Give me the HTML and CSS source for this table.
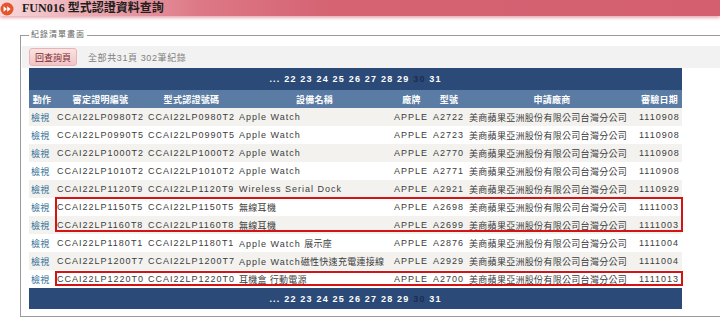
FILE: index.html
```html
<!DOCTYPE html>
<html lang="zh-Hant">
<head>
  <meta charset="UTF-8" />
  <title>FUN016 型式認證資料查詢</title>
  <link rel="stylesheet" href="styles.css">
</head>
<body>
  <header class="topbar">
    <svg class="topicon" width="14" height="14" viewBox="0 0 14 14">
      <circle cx="7" cy="7" r="6.5" fill="#e4572e"/>
      <path d="M3.6 4.2 L7 7 L3.6 9.8 Z M7.2 4.2 L10.6 7 L7.2 9.8 Z" fill="#fff"/>
    </svg>
    <h1>FUN016 型式認證資料查詢</h1>
  </header>

  <!-- 紀錄清單 -->
  <fieldset class="list">
    <legend>紀錄清單畫面</legend>
    <div class="toolbar">
      <button class="btn">回查詢頁</button>
      <span class="total">全部共31頁 302筆紀錄</span>
    </div>

    <div class="grid-wrap">
      <table class="grid">
        <colgroup>
          <col style="width:26px"><col style="width:91px"><col style="width:91px"><col style="width:155px">
          <col style="width:39px"><col style="width:36px"><col style="width:170px"><col style="width:45px">
        </colgroup>
        <thead>
          <tr class="pager"><td colspan="8">
            <span>...</span> <a>22</a> <a>23</a> <a>24</a> <a>25</a> <a>26</a> <a>27</a> <a>28</a> <a>29</a> <a class="cur">30</a> <a>31</a>
          </td></tr>
          <tr class="head">
            <th>動作</th><th>審定證明編號</th><th>型式認證號碼</th><th>設備名稱</th>
            <th>廠牌</th><th>型號</th><th>申請廠商</th><th>審驗日期</th>
          </tr>
        </thead>
        <tbody>
          <tr><td><a class="view">檢視</a></td><td>CCAI22LP0980T2</td><td>CCAI22LP0980T2</td><td>Apple Watch</td><td>APPLE</td><td>A2722</td><td class="zh">美商蘋果亞洲股份有限公司台灣分公司</td><td>1110908</td></tr>
          <tr><td><a class="view">檢視</a></td><td>CCAI22LP0990T5</td><td>CCAI22LP0990T5</td><td>Apple Watch</td><td>APPLE</td><td>A2723</td><td class="zh">美商蘋果亞洲股份有限公司台灣分公司</td><td>1110908</td></tr>
          <tr><td><a class="view">檢視</a></td><td>CCAI22LP1000T2</td><td>CCAI22LP1000T2</td><td>Apple Watch</td><td>APPLE</td><td>A2770</td><td class="zh">美商蘋果亞洲股份有限公司台灣分公司</td><td>1110908</td></tr>
          <tr><td><a class="view">檢視</a></td><td>CCAI22LP1010T2</td><td>CCAI22LP1010T2</td><td>Apple Watch</td><td>APPLE</td><td>A2771</td><td class="zh">美商蘋果亞洲股份有限公司台灣分公司</td><td>1110908</td></tr>
          <tr><td><a class="view">檢視</a></td><td>CCAI22LP1120T9</td><td>CCAI22LP1120T9</td><td>Wireless Serial Dock</td><td>APPLE</td><td>A2921</td><td class="zh">美商蘋果亞洲股份有限公司台灣分公司</td><td>1110929</td></tr>
          <tr><td><a class="view">檢視</a></td><td>CCAI22LP1150T5</td><td>CCAI22LP1150T5</td><td class="zh">無線耳機</td><td>APPLE</td><td>A2698</td><td class="zh">美商蘋果亞洲股份有限公司台灣分公司</td><td>1111003</td></tr>
          <tr><td><a class="view">檢視</a></td><td>CCAI22LP1160T8</td><td>CCAI22LP1160T8</td><td class="zh">無線耳機</td><td>APPLE</td><td>A2699</td><td class="zh">美商蘋果亞洲股份有限公司台灣分公司</td><td>1111003</td></tr>
          <tr><td><a class="view">檢視</a></td><td>CCAI22LP1180T1</td><td>CCAI22LP1180T1</td><td>Apple Watch <span class="zh">展示座</span></td><td>APPLE</td><td>A2876</td><td class="zh">美商蘋果亞洲股份有限公司台灣分公司</td><td>1111004</td></tr>
          <tr><td><a class="view">檢視</a></td><td>CCAI22LP1200T7</td><td>CCAI22LP1200T7</td><td>Apple Watch<span class="zh">磁性快速充電連接線</span></td><td>APPLE</td><td>A2929</td><td class="zh">美商蘋果亞洲股份有限公司台灣分公司</td><td>1111004</td></tr>
          <tr><td><a class="view">檢視</a></td><td>CCAI22LP1220T0</td><td>CCAI22LP1220T0</td><td class="zh">耳機盒 行動電源</td><td>APPLE</td><td>A2700</td><td class="zh">美商蘋果亞洲股份有限公司台灣分公司</td><td>1111013</td></tr>
        </tbody>
        <tfoot>
          <tr class="pager foot"><td colspan="8">
            <span>...</span> <a>22</a> <a>23</a> <a>24</a> <a>25</a> <a>26</a> <a>27</a> <a>28</a> <a>29</a> <a class="cur">30</a> <a>31</a>
          </td></tr>
        </tfoot>
      </table>

      <!-- red annotation boxes -->
      <div class="mark mark-a"></div>
      <div class="mark mark-b"></div>
    </div>
  </fieldset>
</body>
</html>
```

FILE: styles.css
```css
body        {margin:0; background:#fff; font-family:"Liberation Sans", "Noto Sans CJK TC", sans-serif; overflow:hidden;}

.topbar     {height:16px; display:flex; align-items:center; gap:8px; padding-left:0;
             background:linear-gradient(to right, #f7dadd 0, #eeb2b9 70px, #dd7886 200px, #d56372 330px, #d35f6f 100%);
             box-shadow:0 2px 3px rgba(214,104,118,0.55);}
.topicon    {display:block; margin-top:1px;}
.topbar h1  {margin:0; font-family:"Liberation Serif", "Noto Sans CJK TC", serif; font-size:12px; font-weight:bold; color:#1e1e1e; line-height:16px;}

.list       {margin:13px 0 0 20px; padding:0 0 7px 1px; border:1px solid #9a9a9a; border-right:0; min-width:0;}
.list legend{margin-left:7px; padding:0 2px; font-size:8px; letter-spacing:1px; color:#666; line-height:12px;}

.toolbar    {margin-top:5px; height:22px; background:#f2f2f2; display:flex; align-items:center; gap:11px; padding-left:7px;}
.btn        {width:48px; height:18px; padding:0; border:1px solid #e7b3b5; border-radius:3px; cursor:pointer;
             background:linear-gradient(#fbe2e2, #f2c4c6); color:#7b2a2e; font-family:inherit; font-size:9px;}
.total      {font-size:9px; letter-spacing:.6px; color:#808080;}

.grid-wrap  {position:relative; margin-left:7px; width:653px;}
.grid       {width:653px; table-layout:fixed; border-collapse:collapse; font-size:9px; letter-spacing:1px; color:#3c3c3c;}
.grid td, .grid th {padding:0 0 0 2px; white-space:nowrap; overflow:visible; text-align:left;}
.grid tbody td {height:18px;}
.grid tbody tr:nth-child(odd) {background:#f3f2ef;}
.grid .view {color:#2f6d96; letter-spacing:.3px;}
.zh         {letter-spacing:.3px;}

.pager td   {height:22px; background:#2c4a77; color:#fff; font-weight:bold; text-align:center; padding:0; letter-spacing:1.2px;}
.pager.foot td {height:21px;}
.pager a    {color:#fff;}
.pager a.cur{color:#1b2d4e;}

.head th    {height:18px; background:#5a7ba3; color:#fff; font-weight:bold; text-align:center; letter-spacing:.3px; padding:0;}

.mark       {position:absolute; left:26px; width:624px; border:2px solid #d41414;}
.mark-a     {top:129px; height:31px;}
.mark-b     {top:203px; height:11px;}
```
